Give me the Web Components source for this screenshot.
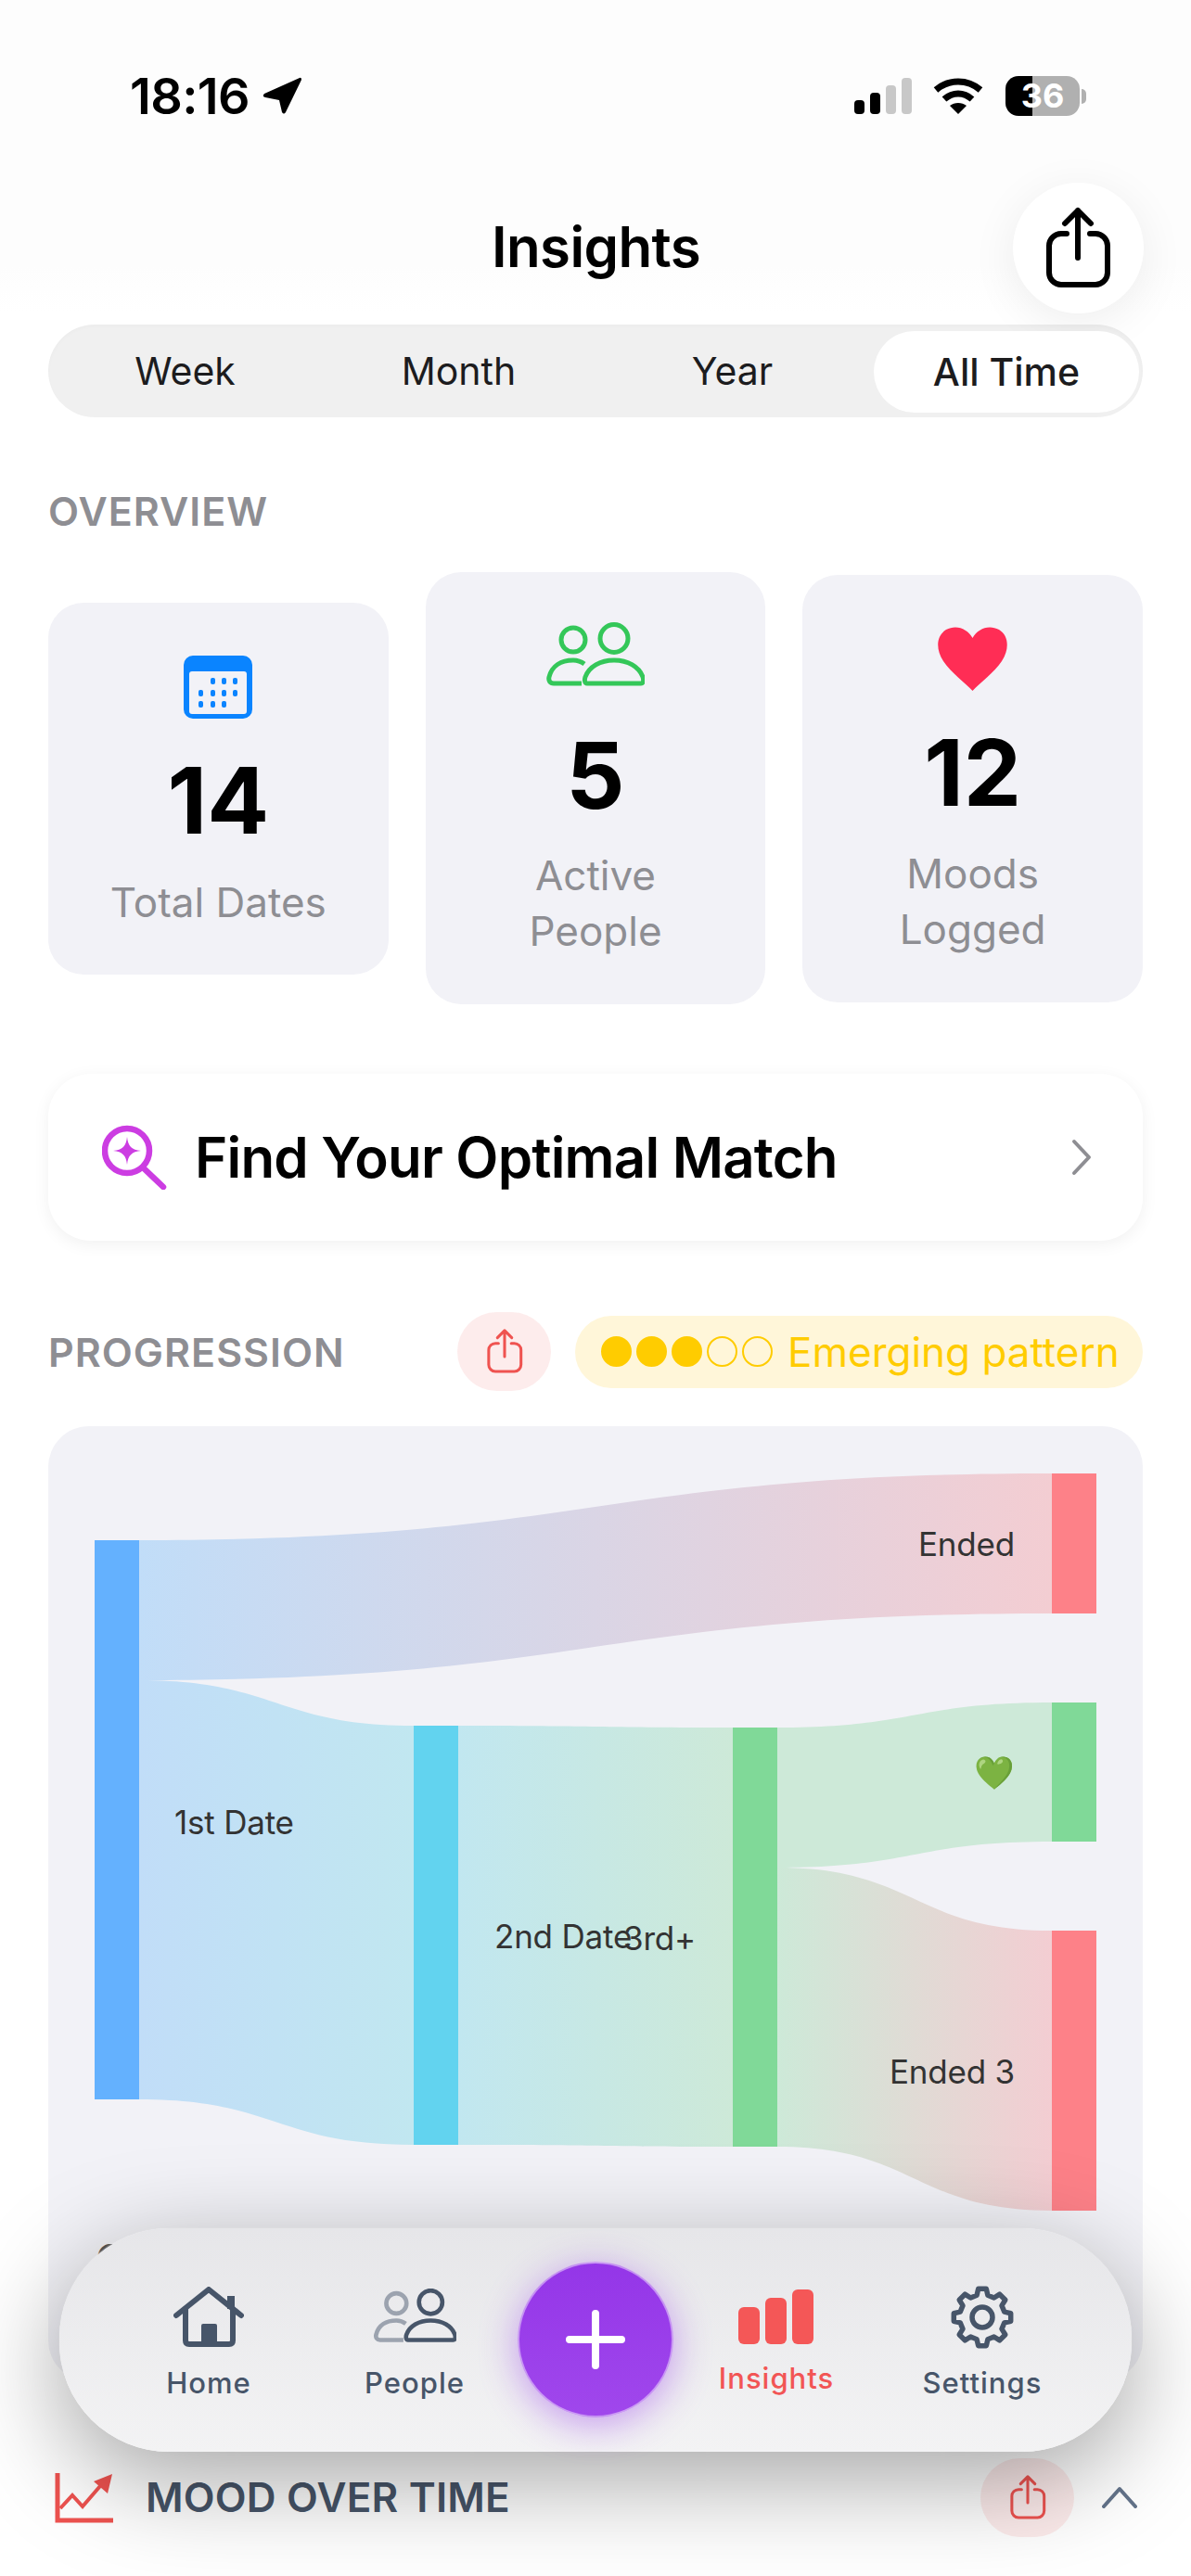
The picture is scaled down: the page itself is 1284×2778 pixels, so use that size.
<!DOCTYPE html>
<html lang="en">
<head>
<meta charset="utf-8">
<title>Insights</title>
<style>
  html, body { margin: 0; padding: 0; background: #fff; }
  body { font-family: Inter, "Noto Sans", sans-serif; }
</style>
</head>
<body>
<insights-page></insights-page>

<script>
const shareIcon = (w, h, color, stroke) => `
  <svg width="${w}" height="${h}" viewBox="0 0 76 92" fill="none" stroke="${color}" stroke-width="${stroke}" stroke-linecap="round" stroke-linejoin="round">
    <path d="M38 5V56M24 19L38 5L52 19"/>
    <path d="M26 30H20a13 13 0 0 0-13 13V72a13 13 0 0 0 13 13H57a13 13 0 0 0 13-13V43a13 13 0 0 0-13-13H51"/>
  </svg>`;

const peopleIcon = (w, h, back, front, stroke) => `
  <svg width="${w}" height="${h}" viewBox="0 0 106 69" fill="none" stroke-width="${stroke}">
    <g stroke="${back}">
      <circle cx="29" cy="19" r="13"/>
      <path d="M38 66H8C4 66 2 63 3 59C6 47 16 41 29 41C33 41 37 42 41 45"/>
    </g>
    <g stroke="${front}">
      <circle cx="73" cy="17.500" r="15"/>
      <path d="M44 66H102C105 66 105 62 104 59C100 48 88 41 73 41C58 41 46 48 42 59C41 62 41 66 44 66Z"/>
    </g>
  </svg>`;

function gearPath() {
  const pts = [];
  for (let i = 0; i < 8; i++) {
    const a = -90 + i * 45;
    [[-14, 24.5], [-8, 31], [8, 31], [14, 24.5]].forEach(([da, r]) => {
      const t = (a + da) * Math.PI / 180;
      pts.push((34 + r * Math.cos(t)).toFixed(1) + ' ' + (34 + r * Math.sin(t)).toFixed(1));
    });
  }
  return 'M' + pts.join('L') + 'Z';
}

class StatusBar extends HTMLElement {
  constructor() {
    super();
    this.attachShadow({ mode: 'open' });
    this.shadowRoot.innerHTML = `
      <style>
        :host { display: flex; align-items: center; justify-content: space-between; height: 47px; padding: 80px 113px 70px 140px; color: #000; }
        .left, .right { display: flex; align-items: center; }
        .time { font-size: 54px; font-weight: 600; line-height: 47px; letter-spacing: -.6px; }
        .left svg { margin-left: 14px; }
        .right svg { display: block; }
        .wifi { margin: 0 24px 0 23px; }
        .battery { position: relative; width: 80px; height: 43px; border-radius: 14px; overflow: hidden; background: linear-gradient(90deg, #000 36%, #b0b0b0 36%); color: #fff; font-size: 36px; font-weight: 700; line-height: 43px; text-align: center; }
        .nub { width: 5px; height: 16px; margin-left: 2px; border-radius: 0 5px 5px 0; background: #b0b0b0; }
      </style>
      <div class="left">
        <span class="time">18:16</span>
        <svg width="42" height="41" viewBox="0 0 42 41"><path d="M40 1L2 18Q-1 21 3 22L18 25L21 38Q23 41 25 38L42 3Q42 0 40 1Z" fill="#000"/></svg>
      </div>
      <div class="right">
        <svg width="62" height="39" viewBox="0 0 62 39">
          <rect x="0" y="24" width="11" height="15" rx="4" fill="#000"/>
          <rect x="17" y="16" width="11" height="23" rx="4" fill="#000"/>
          <rect x="34" y="8" width="11" height="31" rx="4" fill="#c8c8c8"/>
          <rect x="51" y="0" width="11" height="39" rx="4" fill="#c8c8c8"/>
        </svg>
        <svg class="wifi" width="54" height="39" viewBox="0 0 54 39" fill="none" stroke="#000" stroke-width="7">
          <path d="M3 13C17 1 37 1 51 13"/>
          <path d="M12 23C21 15 33 15 42 23"/>
          <path d="M27 39L18 30C23 26 31 26 36 30Z" fill="#000" stroke="none"/>
        </svg>
        <div class="battery">36</div>
        <div class="nub"></div>
      </div>`;
  }
}

class PageHeader extends HTMLElement {
  constructor() {
    super();
    this.attachShadow({ mode: 'open' });
    this.shadowRoot.innerHTML = `
      <style>
        :host { display: grid; grid-template-columns: 141px 1fr 141px; align-items: center; height: 140px; padding: 0 51px 0 52px; }
        h1 { grid-column: 2; margin: -3px 0 0; text-align: center; font-size: 60px; font-weight: 600; line-height: 72px; color: #000; letter-spacing: -.6px; }
        button { grid-column: 3; width: 141px; height: 141px; padding: 0 2px 0 0; border: 0; border-radius: 50%; background: #fff; box-shadow: 0 10px 50px rgba(0,0,0,.07); display: flex; align-items: center; justify-content: center; }
      </style>
      <h1><slot></slot></h1>
      <button>${shareIcon(76, 92, '#000', 6)}</button>`;
  }
}

class SegmentControl extends HTMLElement {
  constructor() {
    super();
    this.attachShadow({ mode: 'open' });
    const items = ['Week', 'Month', 'Year', 'All Time'];
    const active = Number(this.getAttribute('active') || 3);
    this.shadowRoot.innerHTML = `
      <style>
        :host { display: grid; grid-template-columns: repeat(4, 1fr); margin: 13px 52px 0; height: 100px; border-radius: 50px; background: #f0f0f0; box-shadow: inset 0 2px 4px rgba(0,0,0,.02); }
        div { display: flex; align-items: center; justify-content: center; font-size: 41px; font-weight: 400; color: #1c1c1e; border-radius: 44px; }
        .on { background: #fff; margin: 7px 4px 5px 5px; font-weight: 500; }
      </style>
      ${items.map((t, i) => `<div class="${i === active ? 'on' : ''}">${t}</div>`).join('')}`;
  }
}

class SectionLabel extends HTMLElement {
  constructor() {
    super();
    this.attachShadow({ mode: 'open' });
    this.shadowRoot.innerHTML = `
      <style>
        :host { display: block; font-size: 43px; font-weight: 600; line-height: 50px; color: #8e8e93; letter-spacing: 1px; }
      </style>
      <slot></slot>`;
  }
}

class StatCard extends HTMLElement {
  constructor() {
    super();
    this.attachShadow({ mode: 'open' });
    this.shadowRoot.innerHTML = `
      <style>
        :host { display: flex; flex-direction: column; align-items: center; box-sizing: border-box; border-radius: 38px; background: #f2f2f7; padding: var(--top, 56px) 0 var(--bottom, 48px); text-align: center; }
        .icon { display: flex; align-items: center; justify-content: center; height: var(--icon-h, 69px); }
        .value { margin-top: var(--value-gap, 33px); font-size: 99px; font-weight: 700; line-height: 110px; color: #000; }
        .label { margin-top: var(--label-gap, 24px); max-width: 250px; font-size: 44px; line-height: 60px; color: #8e8e93; }
      </style>
      <div class="icon"><slot name="icon"></slot></div>
      <div class="value">${this.getAttribute('value')}</div>
      <div class="label"><slot></slot></div>`;
  }
}

class MatchCard extends HTMLElement {
  constructor() {
    super();
    this.attachShadow({ mode: 'open' });
    this.shadowRoot.innerHTML = `
      <style>
        :host { display: flex; align-items: center; height: 180px; margin: 75px 52px 0; padding: 0 54px 0 58px; box-sizing: border-box; border-radius: 46px; background: #fff; box-shadow: 0 4px 18px rgba(0,0,0,.06); }
        svg { display: block; flex: none; }
        .title { flex: 1; margin: -1px 0 0 30px; font-size: 60px; font-weight: 600; color: #000; letter-spacing: -.8px; }
      </style>
      <svg width="70" height="70" viewBox="0 0 70 70" fill="none">
        <circle cx="27" cy="28" r="24" stroke="#cc3de2" stroke-width="6.500"/>
        <path d="M44 46L66 67" stroke="#cc3de2" stroke-width="6.500" stroke-linecap="round"/>
        <path d="M27 13C28 23 32 27 42 28C32 29 28 33 27 43C26 33 22 29 12 28C22 27 26 23 27 13Z" fill="#cc3de2"/>
      </svg>
      <div class="title"><slot></slot></div>
      <svg width="24" height="40" viewBox="0 0 24 40" fill="none" stroke="#8e8e93" stroke-width="4" stroke-linecap="round" stroke-linejoin="round"><path d="M4 3L20 20L4 37"/></svg>`;
  }
}

class SharePill extends HTMLElement {
  constructor() {
    super();
    this.attachShadow({ mode: 'open' });
    this.shadowRoot.innerHTML = `
      <style>
        :host { display: flex; align-items: center; justify-content: center; flex: none; width: 101px; height: 85px; border-radius: 43px; background: rgba(239, 68, 68, .1); }
      </style>
      ${shareIcon(42, 51, '#ef5350', 5.5)}`;
  }
}

class PatternPill extends HTMLElement {
  constructor() {
    super();
    this.attachShadow({ mode: 'open' });
    const filled = Number(this.getAttribute('filled') || 0);
    const dots = [0, 1, 2, 3, 4].map(i => `<i class="${i < filled ? 'on' : ''}"></i>`).join('');
    this.shadowRoot.innerHTML = `
      <style>
        :host { display: flex; align-items: center; box-sizing: border-box; width: 612px; height: 78px; padding-left: 28px; border-radius: 39px; background: #fff6d9; color: #ffcc00; font-size: 44px; }
        .dots { display: flex; gap: 5px; margin-right: 16px; }
        i { box-sizing: border-box; width: 33px; height: 33px; border-radius: 50%; border: 2.500px solid #ffcc00; }
        i.on { background: #ffcc00; }
      </style>
      <div class="dots">${dots}</div>
      <slot></slot>`;
  }
}

class SankeyChart extends HTMLElement {
  constructor() {
    super();
    this.attachShadow({ mode: 'open' });
    const c = {
      blue: ['#64b1fe', '#c1ddf8'], cyan: ['#62d3ef', '#c1e7f0'],
      green: ['#80d998', '#cde9d8'], red: ['#fd8188', '#f3cdd2']
    };
    const nodes = [
      [102, 1661, 2264, 'blue'], [446, 1861, 2313, 'cyan'], [790, 1863, 2315, 'green'],
      [1134, 1589, 1740, 'red'], [1134, 1836, 1986, 'green'], [1134, 2082, 2384, 'red']
    ];
    const links = [
      [150, 1134, 1661, 1812, 1589, 1740, 'blue', 'red'],
      [150, 446, 1812, 2264, 1861, 2313, 'blue', 'cyan'],
      [494, 790, 1861, 2313, 1863, 2315, 'cyan', 'green'],
      [838, 1134, 1863, 2014, 1836, 1986, 'green', 'green'],
      [838, 1134, 2014, 2315, 2082, 2384, 'green', 'red']
    ];
    const labels = [
      [188, 1965, 'start', '1st Date'], [533, 2088, 'start', '2nd Date'], [672, 2090, 'start', '3rd+'],
      [1094, 1665, 'end', 'Ended'], [1094, 1911, 'end', '💚'], [1094, 2234, 'end', 'Ended 3']
    ];
    const defs = links.map((l, i) => `
      <linearGradient id="g${i}" gradientUnits="userSpaceOnUse" x1="${l[0]}" x2="${l[1]}" y1="0" y2="0">
        <stop offset="0" stop-color="${c[l[6]][1]}"/><stop offset="1" stop-color="${c[l[7]][1]}"/>
      </linearGradient>`).join('');
    const paths = links.map((l, i) => {
      const [x0, x1, a0, a1, b0, b1] = l;
      const m = (x0 + x1) / 2;
      return `<path fill="url(#g${i})" d="M${x0} ${a0}C${m} ${a0} ${m} ${b0} ${x1} ${b0}V${b1}C${m} ${b1} ${m} ${a1} ${x0} ${a1}Z"/>`;
    }).join('');
    const rects = nodes.map(n => `<rect x="${n[0]}" y="${n[1]}" width="48" height="${n[2] - n[1]}" fill="${c[n[3]][0]}"/>`).join('');
    const texts = labels.map(t => `<text x="${t[0]}" y="${t[1]}" text-anchor="${t[2]}" dominant-baseline="central">${t[3]}</text>`).join('');
    this.shadowRoot.innerHTML = `
      <style>
        :host { display: block; height: 1030px; margin: 38px 52px 0; border-radius: 44px; background: #f2f2f7; overflow: hidden; }
        svg { display: block; }
        text { font-size: 35px; fill: #333; font-family: Inter, "Noto Color Emoji", sans-serif; letter-spacing: -.2px; }
        .peek { font-size: 42px; fill: #555; }
      </style>
      <svg width="1180" height="1030" viewBox="52 1538 1180 1030">
        <defs>${defs}</defs>
        ${paths}${rects}${texts}
        <text class="peek" x="103" y="2451">C</text>
      </svg>`;
  }
}

class TabItem extends HTMLElement {
  constructor() {
    super();
    this.attachShadow({ mode: 'open' });
    this.shadowRoot.innerHTML = `
      <style>
        :host { display: flex; flex-direction: column; align-items: center; box-sizing: border-box; width: 222px; padding-top: var(--top, 63px); color: var(--tab-color, #475569); font-size: 31px; font-weight: 500; letter-spacing: 1px; line-height: 40px; }
        .icon { display: flex; height: var(--icon-h, 66px); margin-bottom: var(--gap, 18px); }
      </style>
      <div class="icon"><slot name="icon"></slot></div>
      <slot></slot>`;
  }
}

class TabBar extends HTMLElement {
  constructor() {
    super();
    this.attachShadow({ mode: 'open' });
    this.shadowRoot.innerHTML = `
      <style>
        :host { position: absolute; left: 64px; top: 2403px; display: flex; box-sizing: border-box; width: 1156px; height: 241px; padding: 0 50px; border-radius: 118px; background: linear-gradient(180deg, #e6e6e9, #f3f3f4); box-shadow: 0 30px 110px rgba(0,0,0,.36), 0 0 0 1px rgba(255,255,255,.25); }
        .plus { flex: none; box-sizing: border-box; width: 168px; height: 168px; margin-top: 36px; border-radius: 50%; background: linear-gradient(180deg, #9436e8, #a047ec); border: 2px solid rgba(255,255,255,.45); box-shadow: 0 8px 40px rgba(147,51,234,.45); }
        .plus svg { display: block; margin: 30px auto 0; }
      </style>
      <slot name="left"></slot>
      <div class="plus">
        <svg width="104" height="104" viewBox="0 0 104 104" stroke="#fff" stroke-width="8" stroke-linecap="round"><path d="M52 24V80M24 52H80"/></svg>
      </div>
      <slot name="right"></slot>`;
  }
}

class MoodRow extends HTMLElement {
  constructor() {
    super();
    this.attachShadow({ mode: 'open' });
    this.shadowRoot.innerHTML = `
      <style>
        :host { display: flex; align-items: center; height: 84px; margin: 83px 57px 0 58px; color: #475569; font-size: 44px; font-weight: 600; letter-spacing: .2px; }
        svg { display: block; flex: none; }
        .title { flex: 1; margin-left: 33px; }
        .chev { margin-left: 29px; }
      </style>
      <svg width="66" height="57" viewBox="0 0 66 57" fill="none" stroke="#ef5350">
        <path d="M4 2V53H64" stroke-width="5"/>
        <path d="M7 40L20 26L31 38L50 16" stroke-width="4"/>
        <path d="M43 11L63 3L58 24Z" fill="#ef5350" stroke="none"/>
      </svg>
      <div class="title"><slot></slot></div>
      <share-pill></share-pill>
      <svg class="chev" width="40" height="24" viewBox="0 0 40 24" fill="none" stroke="#64748b" stroke-width="4" stroke-linecap="round" stroke-linejoin="round"><path d="M3 22L20 3L37 22"/></svg>`;
  }
}

class InsightsPage extends HTMLElement {
  constructor() {
    super();
    this.attachShadow({ mode: 'open' });
    this.shadowRoot.innerHTML = `
      <style>
        :host { display: block; position: relative; width: 1284px; height: 2778px; overflow: hidden; background: #fff; }
        .top { background: linear-gradient(180deg, #fdfdfd 85%, #fff); height: 337px; }
        .overview { margin: 76px 52px 0; }
        .stats { display: grid; grid-template-columns: repeat(3, 1fr); gap: 40px; align-items: center; margin: 41px 52px 0; }
        .progress { display: flex; align-items: center; height: 85px; margin: 77px 52px 0; }
        .progress section-label { flex: 1; }
        .progress pattern-pill { margin-left: 26px; }
      </style>
      <div class="top">
        <status-bar></status-bar>
        <page-header>Insights</page-header>
      </div>
      <segment-control active="3"></segment-control>
      <section-label class="overview">OVERVIEW</section-label>
      <div class="stats">
        <stat-card value="14" style="--top:57px;--icon-h:68px;--value-gap:33px;--label-gap:25px;--bottom:48px">
          <svg slot="icon" width="74" height="68" viewBox="0 0 74 68">
            <rect width="74" height="68" rx="10" fill="#0a84ff"/>
            <rect x="6" y="17" width="62" height="46" rx="3" fill="#f2f2f7"/>
            <g fill="#0a84ff">
              <rect x="29" y="24" width="5" height="7" rx="2"/><rect x="41" y="24" width="5" height="7" rx="2"/><rect x="53" y="24" width="5" height="7" rx="2"/>
              <rect x="16" y="37" width="5" height="7" rx="2"/><rect x="29" y="37" width="5" height="7" rx="2"/><rect x="41" y="37" width="5" height="7" rx="2"/><rect x="53" y="37" width="5" height="7" rx="2"/>
              <rect x="16" y="49" width="5" height="7" rx="2"/><rect x="29" y="49" width="5" height="7" rx="2"/><rect x="41" y="49" width="5" height="7" rx="2"/>
            </g>
          </svg>
          Total Dates
        </stat-card>
        <stat-card value="5" style="--top:56px;--value-gap:39px;--label-gap:23px;--bottom:49px">
          <span slot="icon">${peopleIcon(106, 69, '#34c759', '#34c759', 5)}</span>
          Active People
        </stat-card>
        <stat-card value="12" style="--top:56px;--value-gap:33px;--label-gap:24px;--bottom:49px">
          <svg slot="icon" width="75" height="69" viewBox="0 0 75 69"><path d="M37.500 69C30 61 14 49 6 37C-3 23-1 9 9 3C20-3 32 2 37.500 12C43 2 55-3 66 3C76 9 78 23 69 37C61 49 45 61 37.500 69Z" fill="#ff2d55"/></svg>
          Moods Logged
        </stat-card>
      </div>
      <match-card>Find Your Optimal Match</match-card>
      <div class="progress">
        <section-label>PROGRESSION</section-label>
        <share-pill></share-pill>
        <pattern-pill filled="3">Emerging pattern</pattern-pill>
      </div>
      <sankey-chart></sankey-chart>
      <mood-row>MOOD OVER TIME</mood-row>
      <tab-bar>
        <tab-item slot="left">
          <svg slot="icon" width="76" height="66" viewBox="0 0 76 66" fill="none" stroke="#475569" stroke-width="6" stroke-linecap="round" stroke-linejoin="round">
            <path d="M3 31L38 3L73 31"/>
            <path d="M13 24V58Q13 62 17 62H60Q64 62 64 58V24"/>
            <path d="M62 10V24" stroke-width="8" stroke-linecap="butt"/>
            <rect x="30" y="40" width="17" height="22" rx="2" fill="#475569" stroke="none"/>
          </svg>
          Home
        </tab-item>
        <tab-item slot="left" style="--top:65px;--icon-h:58px;--gap:24px">
          <span slot="icon">${peopleIcon(89, 58, '#9ca3af', '#475569', 5.5)}</span>
          People
        </tab-item>
        <tab-item slot="right" style="--top:66px;--icon-h:59px;--gap:17px;--tab-color:#f25555">
          <svg slot="icon" width="82" height="59" viewBox="0 0 82 59" fill="#f45757">
            <rect x="0" y="19" width="23" height="40" rx="6"/><rect x="29" y="9" width="23" height="50" rx="6"/><rect x="58" y="0" width="23" height="59" rx="6"/>
          </svg>
          Insights
        </tab-item>
        <tab-item slot="right" style="--top:62px;--icon-h:68px;--gap:17px">
          <svg slot="icon" width="68" height="68" viewBox="0 0 68 68" fill="none" stroke="#475569" stroke-width="5.500" stroke-linejoin="round">
            <path d="${gearPath()}"/>
            <circle cx="34" cy="34" r="11"/>
          </svg>
          Settings
        </tab-item>
      </tab-bar>`;
  }
}

customElements.define('status-bar', StatusBar);
customElements.define('page-header', PageHeader);
customElements.define('segment-control', SegmentControl);
customElements.define('section-label', SectionLabel);
customElements.define('stat-card', StatCard);
customElements.define('match-card', MatchCard);
customElements.define('share-pill', SharePill);
customElements.define('pattern-pill', PatternPill);
customElements.define('sankey-chart', SankeyChart);
customElements.define('tab-item', TabItem);
customElements.define('tab-bar', TabBar);
customElements.define('mood-row', MoodRow);
customElements.define('insights-page', InsightsPage);
</script>
</body>
</html>
